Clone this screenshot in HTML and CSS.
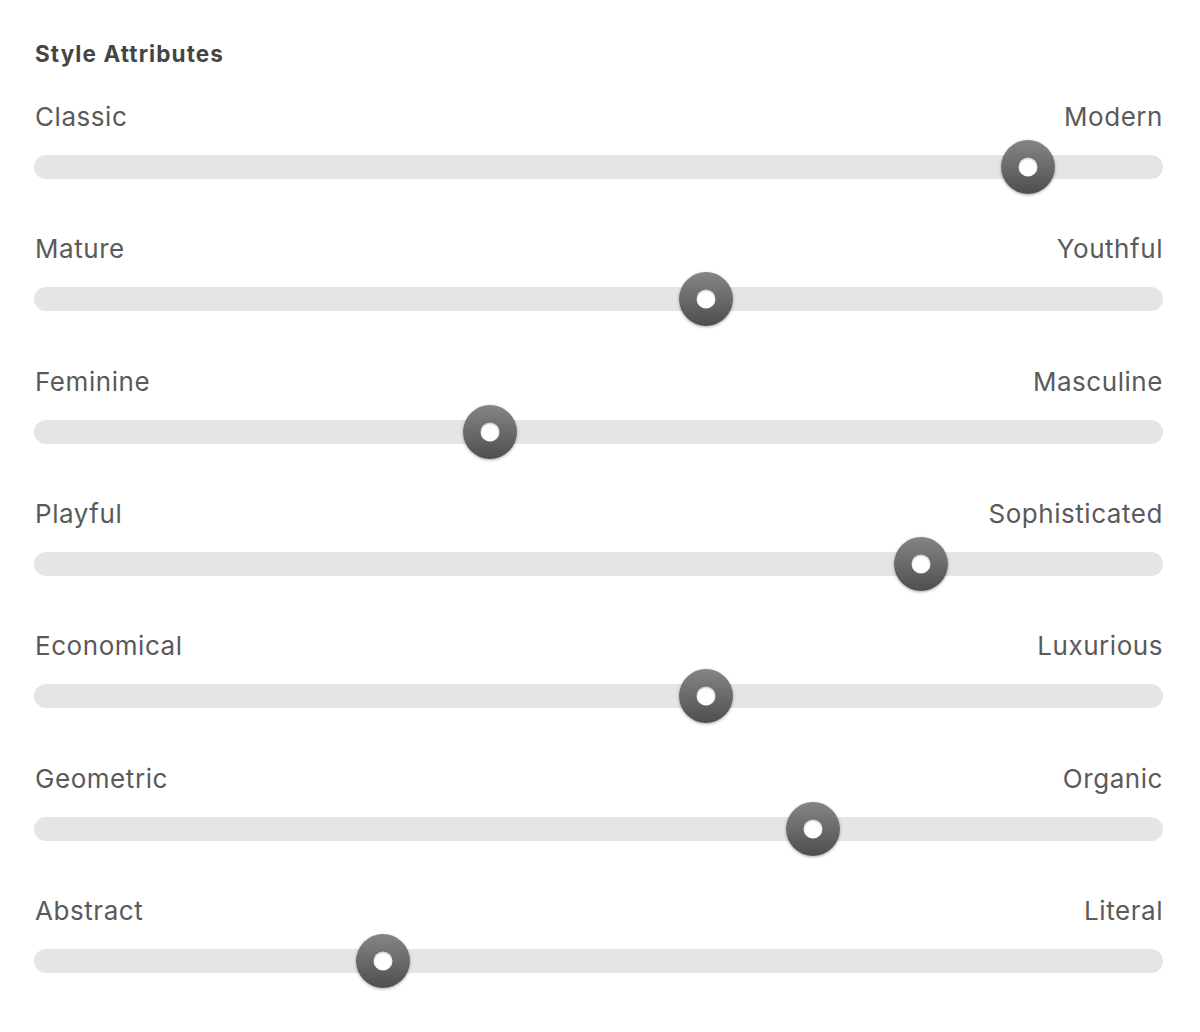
FILE: index.html
```html
<!DOCTYPE html>
<html>
<head>
<meta charset="utf-8">
<link rel="stylesheet" href="styles.css">
</head>
<body>
<div class="panel">
  <h2 class="title">Style Attributes</h2>
  <div class="attr">
    <div class="labels"><span>Classic</span><span>Modern</span></div>
    <div class="track"><div class="knob" style="left: 88.0%"></div></div>
  </div>
  <div class="attr">
    <div class="labels"><span>Mature</span><span>Youthful</span></div>
    <div class="track"><div class="knob" style="left: 59.5%"></div></div>
  </div>
  <div class="attr">
    <div class="labels"><span>Feminine</span><span>Masculine</span></div>
    <div class="track"><div class="knob" style="left: 40.4%"></div></div>
  </div>
  <div class="attr">
    <div class="labels"><span>Playful</span><span>Sophisticated</span></div>
    <div class="track"><div class="knob" style="left: 78.6%"></div></div>
  </div>
  <div class="attr">
    <div class="labels"><span>Economical</span><span>Luxurious</span></div>
    <div class="track"><div class="knob" style="left: 59.5%"></div></div>
  </div>
  <div class="attr">
    <div class="labels"><span>Geometric</span><span>Organic</span></div>
    <div class="track"><div class="knob" style="left: 69.0%"></div></div>
  </div>
  <div class="attr">
    <div class="labels"><span>Abstract</span><span>Literal</span></div>
    <div class="track"><div class="knob" style="left: 30.9%"></div></div>
  </div>
</div>
</body>
</html>
```
FILE: styles.css
```css
html, body {
  margin: 0;
  padding: 0;
  background: #ffffff;
}
body {
  font-family: Inter, "Liberation Sans", sans-serif;
}
.panel {
  padding: 40px 37px 0 34px;
}
.title {
  margin: 0 0 33px 1px;
  font-size: 22.5px;
  line-height: 28px;
  font-weight: 700;
  letter-spacing: 1.1px;
  color: #454545;
}
.attr {
  margin-bottom: 54.33px;
}
.labels {
  display: flex;
  justify-content: space-between;
  padding: 0 0 0 1px;
  font-size: 26px;
  line-height: 32px;
  letter-spacing: 0.55px;
  color: #5a5a5a;
  margin-bottom: 22px;
}
.track {
  position: relative;
  height: 24px;
  border-radius: 12px;
  background: #e5e5e5;
}
.knob {
  position: absolute;
  top: 50%;
  width: 54px;
  height: 54px;
  border-radius: 50%;
  transform: translate(-50%, -50%);
  background: linear-gradient(180deg, #858585 0%, #6a6a6a 50%, #4e4e4e 100%);
  box-shadow: 0 1px 3px rgba(0,0,0,0.35);
}
.knob::after {
  content: "";
  position: absolute;
  left: 50%;
  top: 50%;
  width: 19px;
  height: 19px;
  border-radius: 50%;
  transform: translate(-50%, -50%);
  background: #ffffff;
  box-shadow: inset 0 1px 2px rgba(0,0,0,0.25);
}
```
